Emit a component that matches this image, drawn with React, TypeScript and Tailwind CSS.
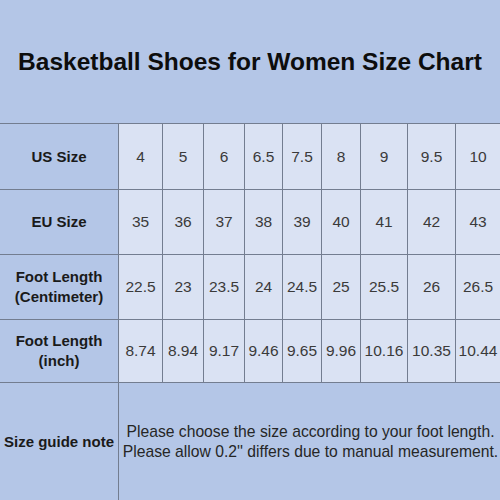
const sizes = [
  ["4", "5", "6", "6.5", "7.5", "8", "9", "9.5", "10"],
  ["35", "36", "37", "38", "39", "40", "41", "42", "43"],
  ["22.5", "23", "23.5", "24", "24.5", "25", "25.5", "26", "26.5"],
  ["8.74", "8.94", "9.17", "9.46", "9.65", "9.96", "10.16", "10.35", "10.44"],
];

const labels = [
  ["US Size"],
  ["EU Size"],
  ["Foot Length", "(Centimeter)"],
  ["Foot Length", "(inch)"],
];

const rowHeights = ["h-[66px]", "h-[65px]", "h-[65px]", "h-[63px]"];

export default function App() {
  return (
    <div className="w-[500px] h-[500px] overflow-hidden bg-[#b4c6e7] font-['Liberation_Sans',Arial,sans-serif]">
      <div className="h-[123px] flex items-center justify-center pt-[1px]">
        <h1 className="text-[24.5px] font-bold text-[#0d0d0d]">
          Basketball Shoes for Women Size Chart
        </h1>
      </div>

      <div className="border-t border-[#737d90] grid grid-cols-[119px_44px_41px_41px_38px_39px_39px_47px_48px_44px]">
        {sizes.map((row, r) => (
          <div key={r} className="contents">
            <div
              className={`${rowHeights[r]} border-r border-b border-[#737d90] flex flex-col items-center justify-center text-[15px] leading-[20px] font-bold text-[#1a1a1a]`}
            >
              {labels[r].map((l) => (
                <span key={l}>{l}</span>
              ))}
            </div>
            {row.map((v, i) => (
              <div
                key={i}
                className={`${rowHeights[r]} border-b border-[#737d90] bg-[#dae2f3] flex items-center justify-center text-[15.5px] text-[#3a3a3a] ${
                  i < row.length - 1 ? "border-r" : ""
                }`}
              >
                {v}
              </div>
            ))}
          </div>
        ))}

        <div className="h-[118px] border-r border-[#737d90] flex items-center justify-center text-[15px] font-bold text-[#1a1a1a]">
          Size guide note
        </div>
        <div className="col-span-9 h-[118px] flex flex-col items-center justify-center text-[15.7px] leading-[20px] text-[#262626] whitespace-nowrap pl-[2px]">
          <span>Please choose the size according to your foot length.</span>
          <span>Please allow 0.2'' differs due to manual measurement.</span>
        </div>
      </div>
    </div>
  );
}
